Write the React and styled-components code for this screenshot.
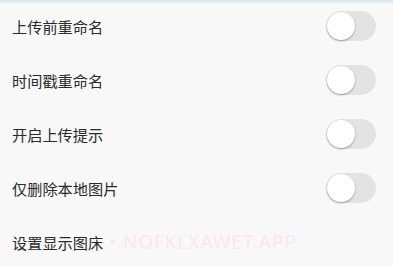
import React from "react";
import styled, { createGlobalStyle } from "styled-components";

const Global = createGlobalStyle`
  html, body { margin: 0; padding: 0; background: #f8f8f8; }
  body { font-family: "Noto Sans CJK SC", "Noto Sans", sans-serif; }
`;

const Page = styled.div`
  width: 393px;
  height: 266px;
  overflow: hidden;
  background: #f8f8f8;
  position: relative;
  display: flex;
  flex-direction: column;
`;

const TopEdge = styled.div`
  position: absolute;
  left: 0;
  right: 0;
  top: 0;
  height: 4px;
  background: linear-gradient(#cfe3f3, rgba(248, 248, 248, 0));
`;

const List = styled.div`
  display: flex;
  flex-direction: column;
  margin-top: -1px;
`;

const Row = styled.div`
  height: 54px;
  display: flex;
  align-items: center;
  justify-content: space-between;
  padding: 0 17px 0 12px;
`;

const Label = styled.span`
  font-size: 15.2px;
  color: #2a2a2a;
  display: flex;
  align-items: center;
`;

const Watermark = styled.span`
  margin-left: 6px;
  font-family: "Noto Sans", sans-serif;
  font-size: 19px;
  letter-spacing: 0.9px;
  color: #fce6f5;
`;

const Track = styled.div`
  width: 50px;
  height: 30px;
  border-radius: 15px;
  background: #e3e3e3;
  position: relative;
`;

const Knob = styled.div`
  position: absolute;
  left: 1px;
  top: 1px;
  width: 28px;
  height: 28px;
  border-radius: 50%;
  background: #fff;
  box-shadow: 0 1px 2px rgba(0, 0, 0, 0.35);
`;

const Toggle = () => (
  <Track>
    <Knob />
  </Track>
);

const items = ["上传前重命名", "时间戳重命名", "开启上传提示", "仅删除本地图片"];

export default function App() {
  return (
    <Page>
      <Global />
      <TopEdge />
      <List>
        {items.map((t) => (
          <Row key={t}>
            <Label>{t}</Label>
            <Toggle />
          </Row>
        ))}
        <Row>
          <Label>
            设置显示图床
            <Watermark>• NOFKLXAWET.APP</Watermark>
          </Label>
        </Row>
      </List>
    </Page>
  );
}
